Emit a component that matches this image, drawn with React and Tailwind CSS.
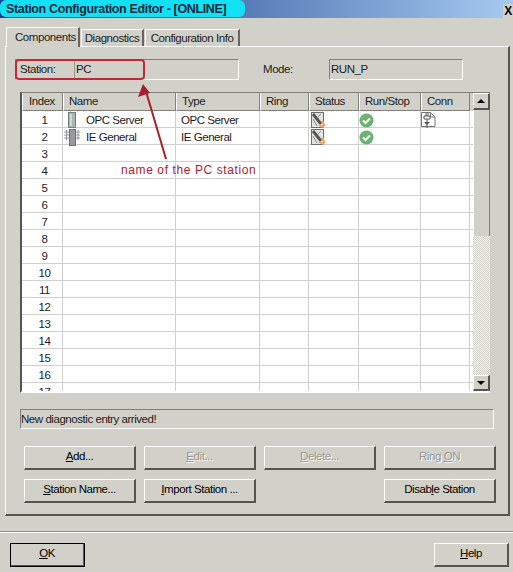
import React from 'react';

const raised = 'border-t border-l border-t-white border-l-white border-b-2 border-r-2 border-b-[#55554f] border-r-[#55554f]';
const sunken = 'border border-t-[#808078] border-l-[#808078] border-b-white border-r-white';

const headers = ['Index', 'Name', 'Type', 'Ring', 'Status', 'Run/Stop', 'Conn'];
const rows = Array.from({ length: 17 }, (_, i) => i + 1);

const ServerIcon = () => (
  <svg width="10" height="16" viewBox="0 0 10 16">
    <rect x="1.500" y="0.500" width="7" height="15" fill="#a9b5b0" stroke="#77807c" />
    <rect x="3" y="2" width="2" height="12" fill="#c4e0d8" />
  </svg>
);

const ModuleIcon = () => (
  <svg width="16" height="17" viewBox="0 0 16 17">
    <rect x="5.500" y="0.500" width="6" height="16" fill="#9a9a9a" stroke="#707070" />
    <path d="M0 3h5M0 6h5M0 9h5M12 3h4M12 6h4M12 9h4M2.500 1v10M14 1v10" stroke="#8a9a9a" fill="none" />
  </svg>
);

const StatusIcon = () => (
  <svg width="15" height="16" viewBox="0 0 15 16">
    <rect x="0.500" y="0.500" width="12" height="15" fill="#e4e4e0" stroke="#6e6e6e" />
    <path d="M2 2l8 10" stroke="#555" strokeWidth="3" />
    <path d="M2 7l4 7M10 2l-3 3" stroke="#8a8a8a" />
    <path d="M8 13l5 2M11 9l3 5" stroke="#f0a860" strokeWidth="2" />
  </svg>
);

const OkIcon = () => (
  <svg width="15" height="15" viewBox="0 0 15 15">
    <circle cx="7.500" cy="7.500" r="7" fill="#6cb272" />
    <path d="M4 7.500l2.500 2.500 4.500-4.500" stroke="#fff" strokeWidth="2" fill="none" />
  </svg>
);

const ConnIcon = () => (
  <svg width="15" height="16" viewBox="0 0 15 16">
    <path d="M0.500 0.500h9l4.500 4.500v9.500h-13.500z" fill="#fff" stroke="#777" />
    <path d="M9.500 0.500v4.500h4.500" fill="none" stroke="#777" />
    <path d="M5 1v3M7 1v3M3 4h6v3h-6zM6 7v9" stroke="#555" fill="none" />
    <path d="M3 10h6l-3 3z" fill="#555" />
  </svg>
);

const Button = ({ children, disabled }) => (
  <button className={`h-[24px] w-[112px] pb-[2px] bg-[#d2d1c9] flex items-center justify-center ${raised} ${disabled ? 'text-[#94948c] [text-shadow:1px_1px_0_#fff]' : 'text-black'}`}>
    {children}
  </button>
);

const Row = ({ n }) => (
  <div className="grid grid-cols-[41px_113px_84px_49px_50px_62px_49px] h-[17px] shrink-0 border-b border-[#cfcfcf]">
    <div className="border-r border-[#cfcfcf] text-center pl-[5px] leading-[18px]">{n}</div>
    <div className="border-r border-[#cfcfcf] flex items-center leading-[18px]">
      {n === 1 && <><span className="w-[23px] pl-[4px] flex"><ServerIcon /></span><span>OPC Server</span></>}
      {n === 2 && <><span className="w-[23px] pl-[1px] flex"><ModuleIcon /></span><span>IE General</span></>}
    </div>
    <div className="border-r border-[#cfcfcf] pl-[5px] leading-[18px]">
      {n === 1 && 'OPC Server'}
      {n === 2 && 'IE General'}
    </div>
    <div className="border-r border-[#cfcfcf]" />
    <div className="border-r border-[#cfcfcf] pl-[2px] flex items-center">{n <= 2 && <StatusIcon />}</div>
    <div className="border-r border-[#cfcfcf] flex items-center">{n <= 2 && <OkIcon />}</div>
    <div className="border-r border-[#cfcfcf] flex items-center">{n === 1 && <ConnIcon />}</div>
  </div>
);

export default function App() {
  return (
    <div className="relative w-[513px] h-[572px] overflow-hidden bg-[#d2d1c9] text-[11.5px] tracking-[-0.45px] text-[#1c1c1c] font-['Liberation_Sans',sans-serif]">
      {/* Title bar */}
      <div className="h-[18px] bg-gradient-to-r from-[#1a3f8c] via-[#5b7fb8] to-[#a6caf0] flex justify-between">
        <div className="w-[245px] h-[17px] bg-[#12e0f4] rounded-[6px] pl-[6px] font-bold text-[12.5px] tracking-[-0.35px] leading-[18px] text-[#08263a] whitespace-nowrap">
          Station Configuration Editor - [ONLINE]
        </div>
        <div className="w-[10px] h-[14px] mt-[4px] bg-[#d2d1c9] text-black font-bold text-[12px] leading-[14px] text-center overflow-hidden">X</div>
      </div>

      {/* Tabs */}
      <div className="flex items-end h-[28px] pl-[6px] gap-[1px] whitespace-nowrap">
        <div className="h-[20px] w-[74px] pl-[8px] leading-[18px] border-t border-l border-white border-r-2 border-r-[#666660] -mb-[1px] relative z-10 bg-[#d2d1c9]">Components</div>
        <div className="h-[17px] w-[63px] text-center leading-[17px] border-t border-l border-white border-r-2 border-r-[#666660]">Diagnostics</div>
        <div className="h-[17px] w-[95px] text-center leading-[17px] border-t border-l border-white border-r-2 border-r-[#666660]">Configuration Info</div>
      </div>

      {/* Panel */}
      <div className={`ml-[5px] w-[505px] h-[470px] pt-[12px] ${raised}`}>
        <div className="flex items-center ml-[9px]">
          <div className={`w-[224px] h-[21px] flex ${sunken}`}>
            <span className="w-[59px] pl-[4px] leading-[19px] border-r border-[#9a9a92]">Station:</span>
            <span className="pl-[1px] leading-[19px]">PC</span>
          </div>
          <span className="ml-[24px] w-[66px]">Mode:</span>
          <div className={`w-[134px] h-[21px] pl-[1px] leading-[19px] ${sunken}`}>RUN_P</div>
        </div>

        {/* Table */}
        <div className="ml-[14px] mt-[12px] w-[470px] h-[301px] flex border-t border-l-2 border-t-[#808078] border-l-[#55554f] border-b-2 border-b-white">
          <div className="w-[451px] h-full overflow-hidden flex flex-col bg-white">
            <div className="grid grid-cols-[41px_113px_84px_49px_50px_62px_49px_3px] h-[18px] shrink-0 bg-[#d2d1c9]">
              {headers.map((h) => (
                <div key={h} className={`leading-[16px] ${h === 'Index' ? 'pl-[6px]' : 'pl-[5px]'} border-l border-l-white border-r border-r-[#808078] border-b border-b-[#808078]`}>{h}</div>
              ))}
              <div />
            </div>
            {rows.map((n) => <Row key={n} n={n} />)}
          </div>
          <div className="w-[17px] h-full flex flex-col bg-[#d2d1c9]">
            <div className={`h-[17px] shrink-0 flex items-center justify-center bg-[#d2d1c9] ${raised}`}>
              <div className="w-0 h-0 border-x-[4px] border-x-transparent border-b-[4px] border-b-black" />
            </div>
            <div className="h-[126px] shrink-0 border-l border-white border-r border-r-[#808078]" />
            <div className="flex-1 bg-[repeating-conic-gradient(#d2d1c9_0_25%,#f4f4f0_0_50%)] bg-[length:2px_2px]" />
            <div className={`h-[16px] shrink-0 flex items-center justify-center bg-[#d2d1c9] ${raised}`}>
              <div className="w-0 h-0 border-x-[4px] border-x-transparent border-t-[4px] border-t-black" />
            </div>
          </div>
        </div>

        {/* Message */}
        <div className={`ml-[14px] mt-[16px] w-[474px] h-[20px] leading-[19px] ${sunken}`}>New diagnostic entry arrived!</div>

        {/* Buttons */}
        <div className="ml-[18px] mt-[17px] w-[472px] grid grid-cols-4 gap-x-[8px] gap-y-[9px]">
          <Button><span><u>A</u>dd...</span></Button>
          <Button disabled><span><u>E</u>dit...</span></Button>
          <Button disabled><span><u>D</u>elete...</span></Button>
          <Button disabled><span>Ring <u>O</u>N</span></Button>
          <Button><span><u>S</u>tation Name...</span></Button>
          <Button><span><u>I</u>mport Station ...</span></Button>
          <div />
          <Button><span>Disab<u>l</u>e Station</span></Button>
        </div>
      </div>

      {/* Footer */}
      <div className="mt-[15px] h-[2px] border-t border-t-[#8e8e86] border-b border-b-white" />
      <div className="flex justify-between pl-[10px] pr-[4px] mt-[10px]">
        <button className={`w-[75px] h-[24px] pb-[2px] bg-[#d2d1c9] text-black outline outline-1 outline-black -outline-offset-1 ${raised}`}><u>O</u>K</button>
        <button className={`w-[75px] h-[24px] pb-[2px] bg-[#d2d1c9] text-black ${raised}`}><u>H</u>elp</button>
      </div>

      {/* Red annotation */}
      <div className="absolute left-[15px] top-[59px] w-[130px] h-[21px] border-2 border-[#c02a38] rounded-[4px]" />
      <svg className="absolute left-[130px] top-[78px]" width="50" height="90" viewBox="0 0 50 90">
        <path d="M36 81L15 10" stroke="#a81e2c" strokeWidth="2" fill="none" />
        <path d="M13 6l-5 13 12-4z" fill="#a81e2c" />
      </svg>
      <div className="absolute left-[121px] top-[161px] text-[12px] text-[#a8242f] tracking-[0.6px] whitespace-nowrap">name of the PC station</div>
    </div>
  );
}
